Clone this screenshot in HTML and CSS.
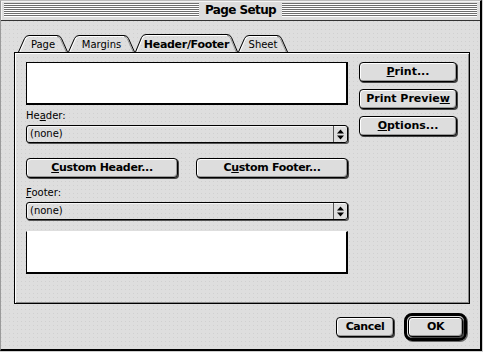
FILE: index.html
```html
<!DOCTYPE html>
<html lang="en">
<head>
    <meta charset="UTF-8"/>
    <title>Page Setup</title>
    <link rel="stylesheet" href="styles.css">
</head>
<body>
<div class="window">
    <div class="titlebar">
        <div class="stripes"></div>
        <div class="title">Page Setup</div>
        <div class="stripes"></div>
    </div>
    <div class="content">
        <div class="tabs">
            <div class="tab tab-page">
                <svg width="50" height="18" viewBox="0 0 50 18">
                    <path d="M1.8 18 L7.6 5 Q8.9 2.5 11 2.5 H39" class="hi"/>
                    <path d="M39 2.5 Q41.1 2.5 42.4 5 L48.2 18" class="lo"/>
                    <path d="M0.5 18 L6.5 4.5 Q7.8 1.5 11 1.5 H39 Q42.2 1.5 43.5 4.5 L49.5 18" class="edge"/>
                </svg>
                <span>Page</span>
            </div>
            <div class="tab tab-margins">
                <svg width="67" height="18" viewBox="0 0 67 18">
                    <path d="M1.8 18 L7.6 5 Q8.9 2.5 11 2.5 H56" class="hi"/>
                    <path d="M56 2.5 Q58.1 2.5 59.4 5 L65.2 18" class="lo"/>
                    <path d="M0.5 18 L6.5 4.5 Q7.8 1.5 11 1.5 H56 Q59.2 1.5 60.5 4.5 L66.5 18" class="edge"/>
                </svg>
                <span>Margins</span>
            </div>
            <div class="tab tab-active">
                <svg width="103" height="18" viewBox="0 0 103 18">
                    <path d="M1.8 18 L7.6 4 Q8.9 1.5 11 1.5 H92" class="hi"/>
                    <path d="M92 1.5 Q94.1 1.5 95.4 4 L101.2 18" class="lo"/>
                    <path d="M0.5 18 L6.5 3.5 Q7.8 0.5 11 0.5 H92 Q95.2 0.5 96.5 3.5 L102.5 18" class="edge"/>
                </svg>
                <span>Header/Footer</span>
            </div>
            <div class="tab tab-sheet">
                <svg width="50" height="18" viewBox="0 0 50 18">
                    <path d="M1.8 18 L7.6 5 Q8.9 2.5 11 2.5 H39" class="hi"/>
                    <path d="M39 2.5 Q41.1 2.5 42.4 5 L48.2 18" class="lo"/>
                    <path d="M0.5 18 L6.5 4.5 Q7.8 1.5 11 1.5 H39 Q42.2 1.5 43.5 4.5 L49.5 18" class="edge"/>
                </svg>
                <span>Sheet</span>
            </div>
        </div>

        <div class="panel">
            <div class="left">
                <div class="preview"></div>
                <div class="label">He<u>a</u>der:</div>
                <div class="popup">
                    <span class="popup-text">(none)</span>
                    <span class="popup-arrows">
                        <svg width="7" height="11" viewBox="0 0 7 11">
                            <polygon points="0,4.5 7,4.5 3.5,0.5"/>
                            <polygon points="0,6.5 7,6.5 3.5,10.5"/>
                        </svg>
                    </span>
                </div>
                <div class="custom-row">
                    <button class="btn custom"><u>C</u>ustom Header...</button>
                    <button class="btn custom">C<u>u</u>stom Footer...</button>
                </div>
                <div class="label label-footer"><u>F</u>ooter:</div>
                <div class="popup">
                    <span class="popup-text">(none)</span>
                    <span class="popup-arrows">
                        <svg width="7" height="11" viewBox="0 0 7 11">
                            <polygon points="0,4.5 7,4.5 3.5,0.5"/>
                            <polygon points="0,6.5 7,6.5 3.5,10.5"/>
                        </svg>
                    </span>
                </div>
                <div class="preview preview-footer"></div>
            </div>
            <div class="right">
                <button class="btn side"><u>P</u>rint...</button>
                <button class="btn side">Print Previe<u>w</u></button>
                <button class="btn side"><u>O</u>ptions...</button>
            </div>
        </div>

        <div class="actions">
            <button class="btn cancel">Cancel</button>
            <div class="ok-ring">
                <button class="btn ok">OK</button>
            </div>
        </div>
    </div>
</div>
</body>
</html>
```

FILE: styles.css
```css
* {
    margin: 0;
    padding: 0;
    box-sizing: border-box;
}

body {
    width: 483px;
    height: 352px;
    overflow: hidden;
    background: #cfcfcf;
    font-family: "DejaVu Sans", sans-serif;
    font-size: 10px;
    color: #000;
}

.window {
    width: 482px;
    height: 351px;
    border-left: 1px solid #9a9a9a;
    border-top: 1px solid #bdbdbd;
    border-right: 2px solid #000;
    border-bottom: 2px solid #000;
    display: flex;
    flex-direction: column;
    background: #dddddd;
}

/* title bar */
.titlebar {
    height: 20px;
    padding: 2px 3px 3px 3px;
    display: flex;
    align-items: stretch;
    border-bottom: 1px solid #333;
    background: #dddddd;
    box-shadow: inset 1px 1px 0 #f4f4f4;
}

.stripes {
    flex: 1;
    background: repeating-linear-gradient(to bottom, #6e6e6e 0 1px, #ffffff 1px 2px);
}

.title {
    padding: 0 6px;
    font-weight: bold;
    font-size: 12px;
    letter-spacing: -0.6px;
    line-height: 14px;
}

/* body of the dialog */
.content {
    flex: 1;
    padding: 13px 0 0 13px;
    background: conic-gradient(at 1px 1px, #dedede 75%, #d0d0d0 0) 0 0 / 4px 4px;
}

.tabs {
    display: flex;
    height: 18px;
    margin-left: 4px;
}

.tab {
    position: relative;
    height: 18px;
    display: flex;
    justify-content: center;
    align-items: center;
    padding-top: 3px;
}

.tab svg {
    position: absolute;
    left: 0;
    top: 0;
}

.tab span {
    position: relative;
}

.tab .edge {
    fill: none;
    stroke: #000;
    stroke-width: 1;
}

.tab .hi {
    fill: none;
    stroke: #fff;
    stroke-width: 1;
}

.tab .lo {
    fill: none;
    stroke: #999;
    stroke-width: 1;
}

.tab-page { width: 50px; }
.tab-margins { width: 67px; }
.tab-sheet { width: 50px; }

.tab-active {
    width: 103px;
    padding-top: 2px;
    font-weight: bold;
    font-size: 11px;
    letter-spacing: -0.3px;
}

.panel {
    width: 456px;
    height: 252px;
    padding: 9px 11px 0 11px;
    display: flex;
    border: 1px solid #000;
    box-shadow: inset 1px 1px 0 #fff, inset -1px -1px 0 #888;
}

.left {
    width: 322px;
    display: flex;
    flex-direction: column;
}

.right {
    width: 98px;
    margin-left: 11px;
    display: flex;
    flex-direction: column;
    gap: 7px;
}

.preview {
    height: 43px;
    background: #fff;
    border: 1px solid #000;
    border-right-width: 2px;
    border-bottom-width: 2px;
}

.preview-footer {
    margin-top: 11px;
    border-top-color: #fff;
}

.label {
    margin-top: 4px;
    margin-bottom: 2px;
    line-height: 14px;
}

.label-footer {
    margin-top: 8px;
}

u {
    text-decoration-thickness: 1px;
    text-underline-offset: 1px;
}

/* popup menus */
.popup {
    height: 18px;
    display: flex;
    align-items: stretch;
    border: 1px solid #000;
    border-radius: 3px;
    box-shadow: 1px 1px 0 #555, inset 1px 1px 0 #f6f6f6;
}

.popup-text {
    flex: 1;
    padding-left: 3px;
    line-height: 16px;
}

.popup-arrows {
    width: 14px;
    display: flex;
    align-items: center;
    justify-content: center;
    border-left: 1px solid #555;
}

.popup-arrows svg {
    fill: #000;
}

/* push buttons */
.btn {
    height: 20px;
    border: 1px solid #000;
    border-radius: 4px;
    background: #dddddd;
    box-shadow: inset 1px 1px 0 #fff, inset -1px -1px 0 #999, 1px 1px 0 #444;
    font-family: "DejaVu Sans", sans-serif;
    font-weight: bold;
    font-size: 11px;
    color: #000;
    line-height: 18px;
    text-align: center;
    appearance: none;
}

.custom-row {
    margin-top: 15px;
    display: flex;
    justify-content: space-between;
}

.custom {
    width: 152px;
    letter-spacing: -0.3px;
}

.side {
    width: 98px;
}

.actions {
    margin-top: 9px;
    padding-right: 13px;
    display: flex;
    justify-content: flex-end;
    align-items: center;
    gap: 10px;
}

.cancel {
    width: 58px;
    letter-spacing: -0.4px;
}

.ok-ring {
    width: 63px;
    height: 28px;
    padding: 1px;
    border: 3px solid #000;
    border-radius: 8px;
    box-shadow: 1px 1px 0 #666;
}

.ok {
    width: 55px;
    letter-spacing: -0.4px;
}
```
